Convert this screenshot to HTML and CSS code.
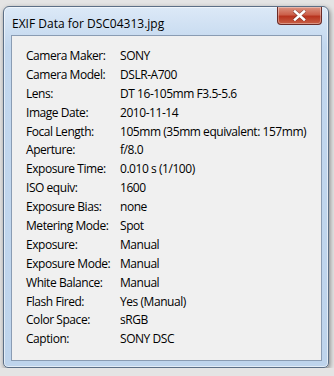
FILE: index.html
```html
<!DOCTYPE html>
<html lang="en">
<head>
    <meta charset="UTF-8">
    <title>EXIF Data for DSC04313.jpg</title>
    <link rel="stylesheet" href="styles.css">
</head>
<body>

    <div class="window">
        <div class="titlebar">
            <span class="title">EXIF Data for DSC04313.jpg</span>
            <button class="close" type="button">
                <svg width="13" height="11" viewBox="0 0 13 11">
                    <path d="M2 1.5 L11 9.5 M11 1.5 L2 9.5" stroke="#4a1a1a" stroke-width="3.6" stroke-linecap="square" opacity="0.55"/>
                    <path d="M2 1.5 L11 9.5 M11 1.5 L2 9.5" stroke="#fff" stroke-width="2.6" stroke-linecap="square"/>
                </svg>
            </button>
        </div>

        <div class="client">
            <dl class="exif">
                <dt>Camera Maker:</dt><dd>SONY</dd>
                <dt>Camera Model:</dt><dd>DSLR-A700</dd>
                <dt>Lens:</dt><dd>DT 16-105mm F3.5-5.6</dd>
                <dt>Image Date:</dt><dd>2010-11-14</dd>
                <dt>Focal Length:</dt><dd>105mm (35mm equivalent: 157mm)</dd>
                <dt>Aperture:</dt><dd>f/8.0</dd>
                <dt>Exposure Time:</dt><dd>0.010 s (1/100)</dd>
                <dt>ISO equiv:</dt><dd>1600</dd>
                <dt>Exposure Bias:</dt><dd>none</dd>
                <dt>Metering Mode:</dt><dd>Spot</dd>
                <dt>Exposure:</dt><dd>Manual</dd>
                <dt>Exposure Mode:</dt><dd>Manual</dd>
                <dt>White Balance:</dt><dd>Manual</dd>
                <dt>Flash Fired:</dt><dd>Yes (Manual)</dd>
                <dt>Color Space:</dt><dd>sRGB</dd>
                <dt>Caption:</dt><dd>SONY DSC</dd>
            </dl>
        </div>
    </div>

</body>
</html>
```

FILE: styles.css
```css
body { margin: 0; background: #e4e4e4; font-family: "Open Sans", "Noto Sans", sans-serif; font-size: 12px; color: #000; }

.window { margin: 6px 0 0 3px; width: 326px; height: 362px; box-sizing: border-box; border: 1px solid #5c6f86; border-radius: 6px 6px 5px 5px; background: linear-gradient(#dce9f7, #c2d7ee 40px, #bed4ec); box-shadow: 1px 2px 5px rgba(0,0,0,0.45), inset 0 0 0 1px rgba(255,255,255,0.55); padding: 0 6px 6px 7px; display: flex; flex-direction: column; }

.titlebar { height: 28px; display: flex; align-items: flex-start; justify-content: space-between; }
.title { margin: 10px 0 0 1px; line-height: 14px; }

.close { width: 45px; height: 18px; margin: 0 0 0 0; padding: 0; border: 1px solid #6a2a26; border-top: none; border-radius: 0 0 4px 4px; background: linear-gradient(#dc9482, #cc604b 45%, #b8341f 55%, #c85f45); display: flex; align-items: center; justify-content: center; box-shadow: inset 0 0 0 1px rgba(255,255,255,0.35); }

.client { flex: 1; border: 1px solid #8a9cb3; background: #f0f0f0; padding: 10px 0 0 14px; }

.exif { margin: 0; display: grid; grid-template-columns: 94px 1fr; grid-auto-rows: 18.9px; align-items: center; letter-spacing: -0.45px; }
.exif dt, .exif dd { margin: 0; white-space: nowrap; }
```
